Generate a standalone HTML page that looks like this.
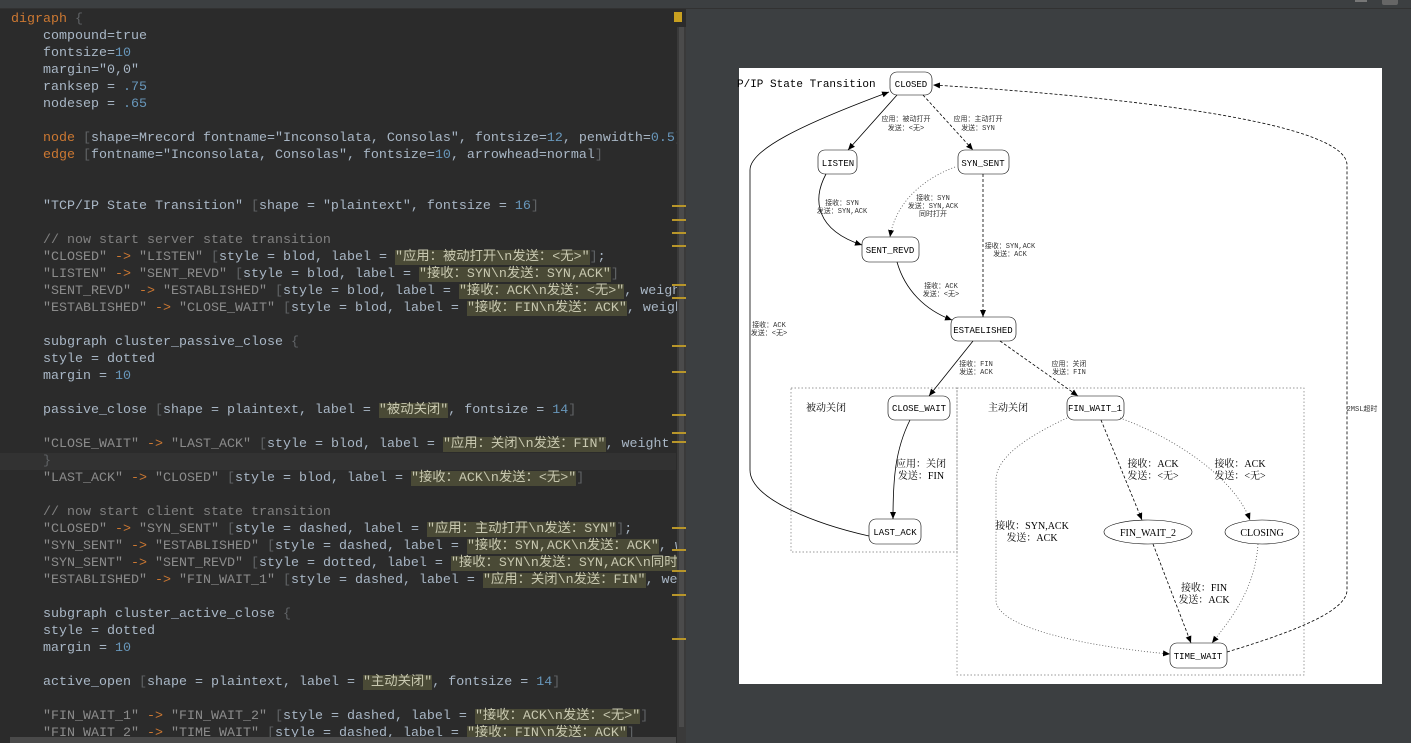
<!DOCTYPE html>
<html><head><meta charset="utf-8">
<style>
*{margin:0;padding:0;box-sizing:border-box}
body{width:1411px;height:743px;background:#3c3f41;position:relative;overflow:hidden;font-family:"Liberation Mono","Noto Sans CJK SC",monospace}
#top{position:absolute;left:0;top:0;width:1411px;height:9px;background:#3c3f41;border-bottom:1px solid #323232}
#ed{position:absolute;left:0;top:9px;width:686px;height:734px;background:#2b2b2b;overflow:hidden}
#code{position:absolute;left:11px;top:2px;font-size:13.33px;line-height:17px;color:#a9b7c6}
.l{height:17px;white-space:pre}
.k{color:#cc7832}.n{color:#6897bb}.s{color:#8c8c8c}.c{color:#808080}.b{color:#606366}
.h{background:#4a4a36;color:#c8c8b0}
.cur{position:absolute;left:0;top:444px;width:676px;height:17px;background:#323232}
#vs{position:absolute;left:677px;top:18px;width:9px;height:716px;background:#3a3a3a}
#vs i{position:absolute;left:2px;top:0;width:5px;height:700px;background:#4b4b4b}
.m{position:absolute;left:672px;width:14px;height:2px;background:#b8962a}
#hs{position:absolute;left:10px;top:728px;width:666px;height:6px;background:#4a4a4a}
#canvas{position:absolute;left:739px;top:68px;width:643px;height:616px;background:#fff;overflow:hidden}
</style></head><body>
<div id="top"></div>
<div id="ed">
<div class="cur"></div>
<div id="code"><div class="l"><span class="k">digraph</span> <span class="b">{</span></div><div class="l">    compound=true</div><div class="l">    fontsize=<span class="n">10</span></div><div class="l">    margin="0,0"</div><div class="l">    ranksep = <span class="n">.75</span></div><div class="l">    nodesep = <span class="n">.65</span></div><div class="l"> </div><div class="l">    <span class="k">node</span> <span class="b">[</span>shape=Mrecord fontname="Inconsolata, Consolas", fontsize=<span class="n">12</span>, penwidth=<span class="n">0.5</span><span class="b">]</span></div><div class="l">    <span class="k">edge</span> <span class="b">[</span>fontname="Inconsolata, Consolas", fontsize=<span class="n">10</span>, arrowhead=normal<span class="b">]</span></div><div class="l"> </div><div class="l"> </div><div class="l">    "TCP/IP State Transition" <span class="b">[</span>shape = "plaintext", fontsize = <span class="n">16</span><span class="b">]</span></div><div class="l"> </div><div class="l"><span class="c">    // now start server state transition</span></div><div class="l">    <span class="s">"CLOSED"</span> <span class="k">-&gt;</span> <span class="s">"LISTEN"</span> <span class="b">[</span>style = blod, label = <span class="h">"应用：被动打开\n发送：&lt;无&gt;"</span><span class="b">]</span>;</div><div class="l">    <span class="s">"LISTEN"</span> <span class="k">-&gt;</span> <span class="s">"SENT_REVD"</span> <span class="b">[</span>style = blod, label = <span class="h">"接收：SYN\n发送：SYN,ACK"</span><span class="b">]</span></div><div class="l">    <span class="s">"SENT_REVD"</span> <span class="k">-&gt;</span> <span class="s">"ESTABLISHED"</span> <span class="b">[</span>style = blod, label = <span class="h">"接收：ACK\n发送：&lt;无&gt;"</span>, weight = 2<span class="b">]</span></div><div class="l">    <span class="s">"ESTABLISHED"</span> <span class="k">-&gt;</span> <span class="s">"CLOSE_WAIT"</span> <span class="b">[</span>style = blod, label = <span class="h">"接收：FIN\n发送：ACK"</span>, weight = 2<span class="b">]</span></div><div class="l"> </div><div class="l">    subgraph cluster_passive_close <span class="b">{</span></div><div class="l">    style = dotted</div><div class="l">    margin = <span class="n">10</span></div><div class="l"> </div><div class="l">    passive_close <span class="b">[</span>shape = plaintext, label = <span class="h">"被动关闭"</span>, fontsize = <span class="n">14</span><span class="b">]</span></div><div class="l"> </div><div class="l">    <span class="s">"CLOSE_WAIT"</span> <span class="k">-&gt;</span> <span class="s">"LAST_ACK"</span> <span class="b">[</span>style = blod, label = <span class="h">"应用：关闭\n发送：FIN"</span>, weight = 2<span class="b">]</span></div><div class="l">    <span class="b">}</span></div><div class="l">    <span class="s">"LAST_ACK"</span> <span class="k">-&gt;</span> <span class="s">"CLOSED"</span> <span class="b">[</span>style = blod, label = <span class="h">"接收：ACK\n发送：&lt;无&gt;"</span><span class="b">]</span></div><div class="l"> </div><div class="l"><span class="c">    // now start client state transition</span></div><div class="l">    <span class="s">"CLOSED"</span> <span class="k">-&gt;</span> <span class="s">"SYN_SENT"</span> <span class="b">[</span>style = dashed, label = <span class="h">"应用：主动打开\n发送：SYN"</span><span class="b">]</span>;</div><div class="l">    <span class="s">"SYN_SENT"</span> <span class="k">-&gt;</span> <span class="s">"ESTABLISHED"</span> <span class="b">[</span>style = dashed, label = <span class="h">"接收：SYN,ACK\n发送：ACK"</span>, weight = 2<span class="b">]</span></div><div class="l">    <span class="s">"SYN_SENT"</span> <span class="k">-&gt;</span> <span class="s">"SENT_REVD"</span> <span class="b">[</span>style = dotted, label = <span class="h">"接收：SYN\n发送：SYN,ACK\n同时打开"</span><span class="b">]</span></div><div class="l">    <span class="s">"ESTABLISHED"</span> <span class="k">-&gt;</span> <span class="s">"FIN_WAIT_1"</span> <span class="b">[</span>style = dashed, label = <span class="h">"应用：关闭\n发送：FIN"</span>, weight = 2<span class="b">]</span></div><div class="l"> </div><div class="l">    subgraph cluster_active_close <span class="b">{</span></div><div class="l">    style = dotted</div><div class="l">    margin = <span class="n">10</span></div><div class="l"> </div><div class="l">    active_open <span class="b">[</span>shape = plaintext, label = <span class="h">"主动关闭"</span>, fontsize = <span class="n">14</span><span class="b">]</span></div><div class="l"> </div><div class="l">    <span class="s">"FIN_WAIT_1"</span> <span class="k">-&gt;</span> <span class="s">"FIN_WAIT_2"</span> <span class="b">[</span>style = dashed, label = <span class="h">"接收：ACK\n发送：&lt;无&gt;"</span><span class="b">]</span></div><div class="l">    <span class="s">"FIN_WAIT_2"</span> <span class="k">-&gt;</span> <span class="s">"TIME_WAIT"</span> <span class="b">[</span>style = dashed, label = <span class="h">"接收：FIN\n发送：ACK"</span><span class="b">]</span></div></div>
<div id="vs"><i></i></div>
<div style="position:absolute;left:674px;top:3px;width:8px;height:10px;background:#c8a020"></div>
<div class="m" style="top:196px"></div><div class="m" style="top:210px"></div><div class="m" style="top:223px"></div><div class="m" style="top:236px"></div>
<div class="m" style="top:275px"></div><div class="m" style="top:288px"></div><div class="m" style="top:336px"></div><div class="m" style="top:362px"></div><div class="m" style="top:405px"></div><div class="m" style="top:423px"></div><div class="m" style="top:432px"></div><div class="m" style="top:518px"></div><div class="m" style="top:540px"></div><div class="m" style="top:561px"></div><div class="m" style="top:585px"></div><div class="m" style="top:629px"></div>
<div id="hs"></div>
</div>
<div style="position:absolute;left:1355px;top:0;width:12px;height:2px;background:#777"></div>
<div style="position:absolute;left:1382px;top:0;width:16px;height:5px;background:#666;border-radius:0 0 2px 2px"></div>
<div id="canvas"></div>
<svg style="position:absolute;left:0;top:0" width="1411" height="743" font-family="Liberation Mono, Noto Sans CJK SC, monospace">
<defs><marker id="a" markerWidth="8" markerHeight="8" refX="7" refY="4" orient="auto" markerUnits="userSpaceOnUse"><path d="M0,1 L7,4 L0,7 Z" fill="#000"/></marker></defs>
<text x="737" y="87" font-size="11" fill="#000">P/IP State Transition</text>
<g fill="#fff" stroke="#000" stroke-width="0.6">
<rect x="890" y="72" width="42" height="23" rx="7"/>
<rect x="818" y="150" width="39" height="24" rx="7"/>
<rect x="958" y="150" width="51" height="24" rx="7"/>
<rect x="862" y="237" width="57" height="25" rx="7"/>
<rect x="951" y="317" width="65" height="24" rx="7"/>
<rect x="888" y="396" width="62" height="24" rx="7"/>
<rect x="1067" y="396" width="57" height="24" rx="7"/>
<rect x="869" y="519" width="52" height="25" rx="7"/>
<ellipse cx="1148" cy="532" rx="44" ry="12"/>
<ellipse cx="1262" cy="532" rx="37" ry="12"/>
<rect x="1170" y="643" width="57" height="25" rx="7"/>
</g>
<g fill="none" stroke="#777" stroke-width="0.7" stroke-dasharray="1.5,2">
<rect x="791" y="388" width="166" height="164"/>
<rect x="957" y="388" width="347" height="287"/>
</g>
<g fill="none" stroke="#000" stroke-width="0.8">
<path d="M897,95 L848,150" marker-end="url(#a)"/>
<path d="M923,95 L973,150" stroke-dasharray="3,2" marker-end="url(#a)"/>
<path d="M826,174 C812,200 816,230 862,245" marker-end="url(#a)"/>
<path d="M955,167 C920,180 895,205 890,237" stroke-dasharray="1,2" stroke="#555" marker-end="url(#a)"/>
<path d="M983,174 L983,317" stroke-dasharray="3,2" marker-end="url(#a)"/>
<path d="M897,262 C905,290 925,310 952,320" marker-end="url(#a)"/>
<path d="M973,341 L929,396" marker-end="url(#a)"/>
<path d="M1000,341 L1078,396" stroke-dasharray="3,2" marker-end="url(#a)"/>
<path d="M910,420 C895,450 893,480 893,519" marker-end="url(#a)"/>
<path d="M1101,420 L1142,520" stroke-dasharray="3,2" marker-end="url(#a)"/>
<path d="M1120,418 C1180,440 1235,480 1250,520" stroke-dasharray="1,2" stroke="#555" marker-end="url(#a)"/>
<path d="M1067,418 C1020,440 996,460 996,480 L996,600 C996,630 1100,648 1170,654" stroke-dasharray="1,2" stroke="#555" marker-end="url(#a)"/>
<path d="M1153,544 L1191,643" stroke-dasharray="3,2" marker-end="url(#a)"/>
<path d="M1258,544 C1255,590 1230,620 1212,643" stroke-dasharray="1,2" stroke="#555" marker-end="url(#a)"/>
<path d="M869,536 C820,525 750,500 750,470 L750,170 C750,150 800,125 889,92" marker-end="url(#a)"/>
<path d="M1227,652 C1300,630 1347,610 1347,590 L1347,165 C1347,120 1100,95 933,85" stroke-dasharray="3,2" marker-end="url(#a)"/>
</g>
<g font-size="9" text-anchor="middle" fill="#000">
<text x="911" y="87">CLOSED</text>
<text x="838" y="166">LISTEN</text>
<text x="983" y="166">SYN_SENT</text>
<text x="890" y="253">SENT_REVD</text>
<text x="983" y="333">ESTAELISHED</text>
<text x="919" y="411">CLOSE_WAIT</text>
<text x="1095" y="411">FIN_WAIT_1</text>
<text x="895" y="535">LAST_ACK</text>
<text x="1198" y="659">TIME_WAIT</text>
</g>
<g font-family="Liberation Serif, Noto Serif CJK SC, serif" font-size="10" text-anchor="middle" fill="#000">
<text x="1148" y="536">FIN_WAIT_2</text>
<text x="1262" y="536">CLOSING</text>
<text x="921" y="467">应用：关闭</text><text x="921" y="479">发送：FIN</text>
<text x="1153" y="467">接收：ACK</text><text x="1153" y="479">发送：&lt;无&gt;</text>
<text x="1240" y="467">接收：ACK</text><text x="1240" y="479">发送：&lt;无&gt;</text>
<text x="1032" y="529">接收：SYN,ACK</text><text x="1032" y="541">发送：ACK</text>
<text x="1204" y="591">接收：FIN</text><text x="1204" y="603">发送：ACK</text>
<text x="826" y="411">被动关闭</text>
<text x="1008" y="411">主动关闭</text>
</g>
<g font-size="7" text-anchor="middle" fill="#333">
<text x="906" y="121">应用：被动打开</text><text x="906" y="130">发送：&lt;无&gt;</text>
<text x="978" y="121">应用：主动打开</text><text x="978" y="130">发送：SYN</text>
<text x="842" y="205">接收：SYN</text><text x="842" y="213">发送：SYN,ACK</text>
<text x="933" y="200">接收：SYN</text><text x="933" y="208">发送：SYN,ACK</text><text x="933" y="216">同时打开</text>
<text x="1010" y="248">接收：SYN,ACK</text><text x="1010" y="256">发送：ACK</text>
<text x="941" y="288">接收：ACK</text><text x="941" y="296">发送：&lt;无&gt;</text>
<text x="976" y="366">接收：FIN</text><text x="976" y="374">发送：ACK</text>
<text x="1069" y="366">应用：关闭</text><text x="1069" y="374">发送：FIN</text>
<text x="769" y="327">接收：ACK</text><text x="769" y="335">发送：&lt;无&gt;</text>
<text x="1362" y="411">2MSL超时</text>
</g>
</svg>
</body></html>
